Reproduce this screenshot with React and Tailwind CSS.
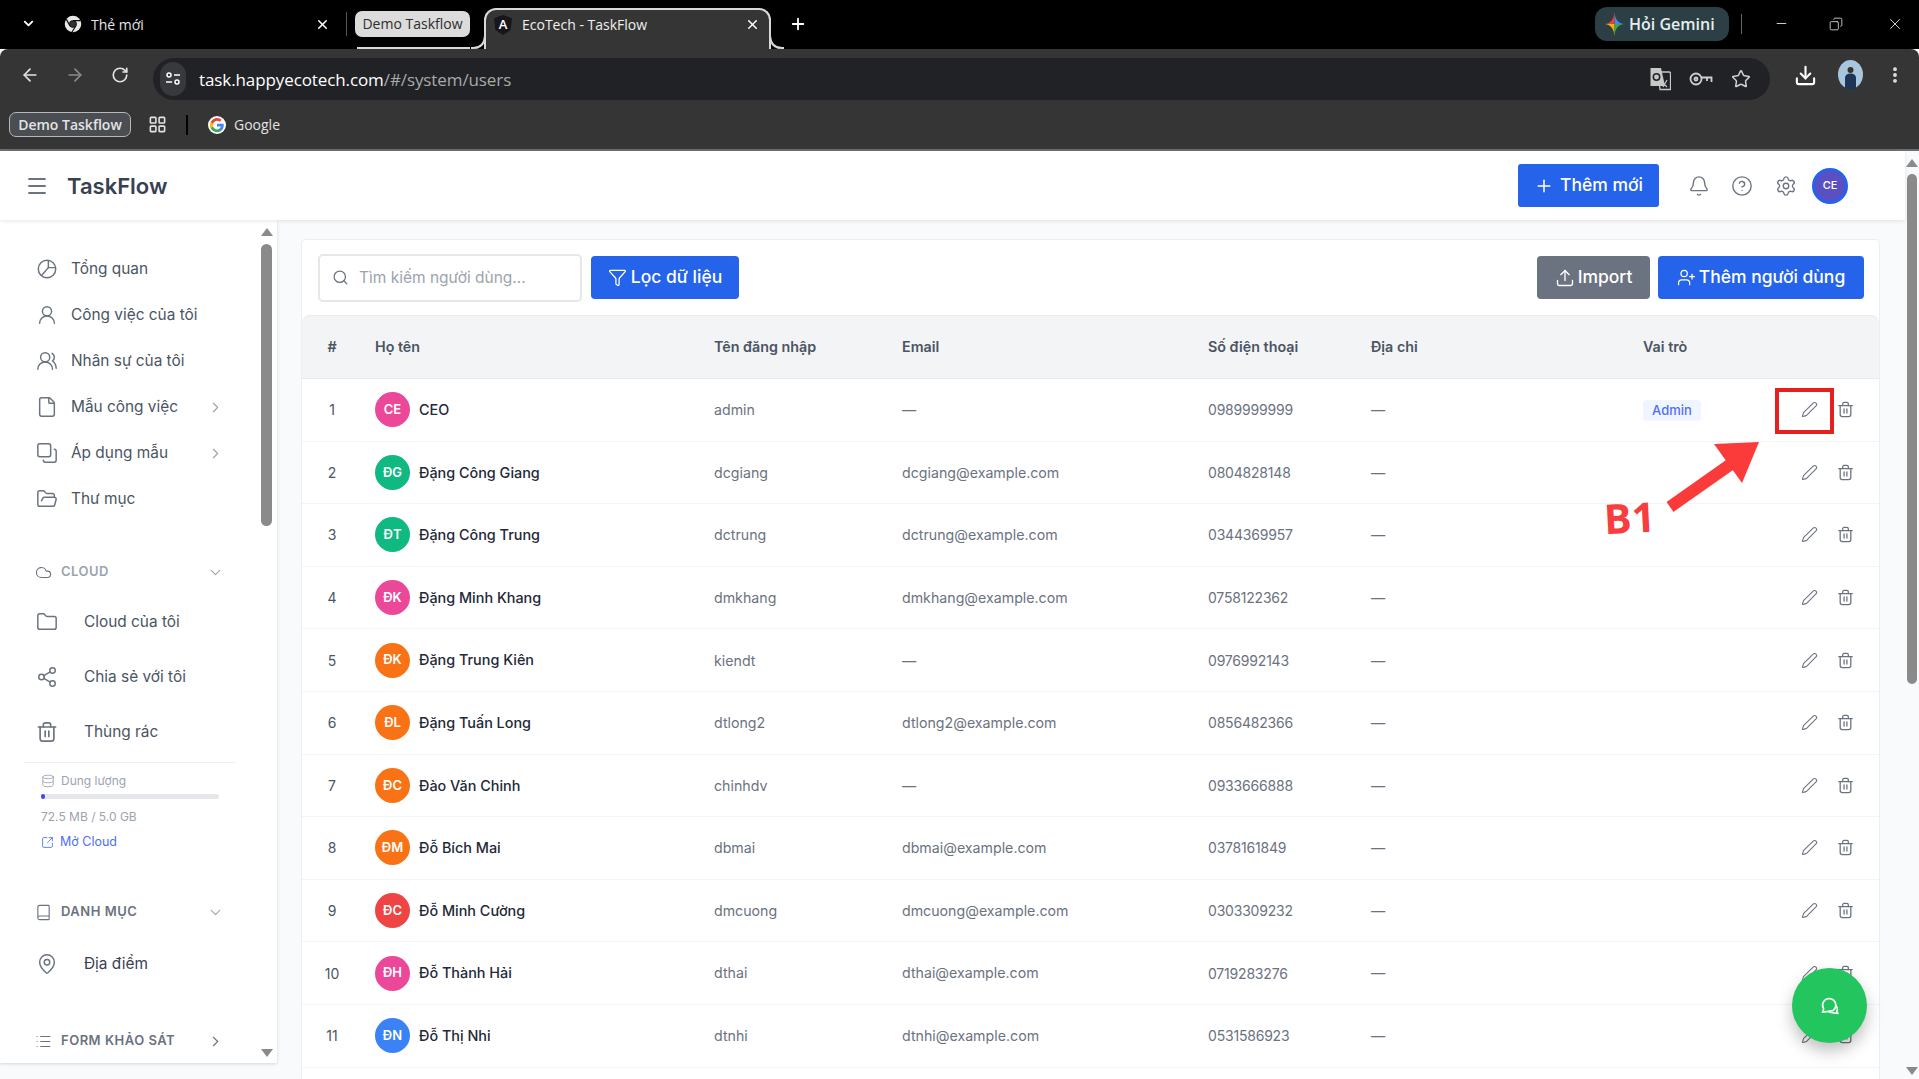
import {
  ArrowLeft, ArrowRight, Bell, Book, ChevronDown, ChevronRight, CircleHelp, Cloud, Copy, Database, Download,
  EllipsisVertical, File, Filter, Folder, FolderOpen, LayoutGrid, List, MapPin, Menu, Pen,
  Plus, RotateCw, Search, Settings, Share2, SquareArrowOutUpRight, Star, Upload, UserPlus, UserRound, UsersRound, X, Minus,
} from "lucide-react";

const users = [
  { id: 1, initials: "CE", color: "bg-[#ec4899]", name: "CEO", login: "admin", email: "—", phone: "0989999999", role: "Admin" },
  { id: 2, initials: "ĐG", color: "bg-[#10b981]", name: "Đặng Công Giang", login: "dcgiang", email: "dcgiang@example.com", phone: "0804828148" },
  { id: 3, initials: "ĐT", color: "bg-[#10b981]", name: "Đặng Công Trung", login: "dctrung", email: "dctrung@example.com", phone: "0344369957" },
  { id: 4, initials: "ĐK", color: "bg-[#ec4899]", name: "Đặng Minh Khang", login: "dmkhang", email: "dmkhang@example.com", phone: "0758122362" },
  { id: 5, initials: "ĐK", color: "bg-[#f97316]", name: "Đặng Trung Kiên", login: "kiendt", email: "—", phone: "0976992143" },
  { id: 6, initials: "ĐL", color: "bg-[#f97316]", name: "Đặng Tuấn Long", login: "dtlong2", email: "dtlong2@example.com", phone: "0856482366" },
  { id: 7, initials: "ĐC", color: "bg-[#f97316]", name: "Đào Văn Chinh", login: "chinhdv", email: "—", phone: "0933666888" },
  { id: 8, initials: "ĐM", color: "bg-[#f97316]", name: "Đỗ Bích Mai", login: "dbmai", email: "dbmai@example.com", phone: "0378161849" },
  { id: 9, initials: "ĐC", color: "bg-[#ef4444]", name: "Đỗ Minh Cường", login: "dmcuong", email: "dmcuong@example.com", phone: "0303309232" },
  { id: 10, initials: "ĐH", color: "bg-[#ec4899]", name: "Đỗ Thành Hải", login: "dthai", email: "dthai@example.com", phone: "0719283276" },
  { id: 11, initials: "ĐN", color: "bg-[#3b82f6]", name: "Đỗ Thị Nhi", login: "dtnhi", email: "dtnhi@example.com", phone: "0531586923" },
];

const cols = "grid grid-cols-[73px_339px_188px_306px_163px_272px_1fr] items-center";

function PieIcon() {
  return (
    <svg width="22" height="22" viewBox="0 0 24 24" fill="none" stroke="currentColor" strokeWidth="1.6" strokeLinecap="round" strokeLinejoin="round">
      <circle cx="12" cy="12" r="9.5" />
      <path d="M13.5 2.6V10.5H21.4" />
      <path d="M13.5 10.5L6.5 18.5" />
    </svg>
  );
}

function TrashIcon({ size = 17 }) {
  return (
    <svg width={size} height={size} viewBox="0 0 24 24" fill="none" stroke="currentColor" strokeWidth="1.8" strokeLinecap="round" strokeLinejoin="round">
      <path d="M2.5 6.5H21.5" />
      <path d="M8 6.5V4a2 2 0 0 1 2-2h4a2 2 0 0 1 2 2v2.5" />
      <path d="M4.5 6.5V19a3 3 0 0 0 3 3h9a3 3 0 0 0 3-3V6.5" />
      <path d="M10 11V17M14 11V17" />
    </svg>
  );
}

function ChromeLogo() {
  return (
    <svg width="18" height="18" viewBox="0 0 24 24">
      <circle cx="12" cy="12" r="11" fill="#e8e8e8" />
      <path d="M12 7.5H22M8 14.5L3 5.5M15.5 15L10.5 23" stroke="#111" strokeWidth="1.6" />
      <circle cx="12" cy="12" r="4.4" fill="#333" stroke="#111" strokeWidth="1.4" />
    </svg>
  );
}

function AngularLogo() {
  return (
    <div className="relative w-[18px] h-[20px] flex items-center justify-center">
      <svg width="18" height="20" viewBox="0 0 18 20" className="absolute inset-0">
        <path d="M9 0L0 3.2L1.4 15L9 20L16.6 15L18 3.2Z" fill="#17171b" />
      </svg>
      <span className="relative text-white text-[13px] font-semibold leading-none">A</span>
    </div>
  );
}

function GoogleLogo() {
  return (
    <svg width="18" height="18" viewBox="0 0 48 48">
      <circle cx="24" cy="24" r="24" fill="#fff" />
      <path fill="#4285f4" d="M42 24.5c0-1.300-.1-2.600-.4-3.800H24v7.300h10.100c-.4 2.300-1.700 4.300-3.700 5.600v4.600h6c3.500-3.200 5.600-8 5.600-13.700z" />
      <path fill="#34a853" d="M24 43c5 0 9.300-1.700 12.400-4.400l-6-4.600c-1.700 1.100-3.900 1.800-6.400 1.800-4.900 0-9-3.300-10.500-7.700H7.300v4.800C10.400 38.300 16.700 43 24 43z" />
      <path fill="#fbbc05" d="M13.500 28.100c-.8-2.300-.8-4.900 0-7.200V16H7.300c-2.600 5.100-2.600 11.100 0 16.900z" />
      <path fill="#ea4335" d="M24 12.800c2.700 0 5.200.9 7.100 2.800l5.300-5.300C33.200 7.200 28.900 5 24 5 16.700 5 10.400 9.700 7.300 16l6.200 4.900c1.500-4.500 5.600-8.100 10.500-8.100z" />
    </svg>
  );
}

function GeminiSpark() {
  return (
    <svg width="19" height="24" viewBox="0 0 24 24" preserveAspectRatio="none">
      <path d="M12 0C12.800 7 16 11 24 12H12Z" fill="#4285f4" />
      <path d="M12 0C11.200 7 8 11 0 12H12Z" fill="#ea4335" />
      <path d="M0 12C8 13 11.200 17 12 24V12Z" fill="#f4b400" />
      <path d="M24 12C16 13 12.800 17 12 24V12Z" fill="#34a853" />
    </svg>
  );
}

function TranslateIcon() {
  return (
    <svg width="22" height="24" viewBox="0 0 22 24" className="text-[#c8c8c8]">
      <path d="M9 5H20a1.500 1.500 0 0 1 1.500 1.500V22.500H11Z" fill="none" stroke="currentColor" strokeWidth="1.300" />
      <path d="M1.500 1H12L16 19H1.500Z" fill="currentColor" />
      <circle cx="7.500" cy="10" r="3.200" fill="none" stroke="#212225" strokeWidth="1.500" />
      <path d="M13 15L18 20M18 13L14 20" stroke="currentColor" strokeWidth="1.200" />
    </svg>
  );
}

function KeyIcon() {
  return (
    <svg width="24" height="16" viewBox="0 0 24 16" fill="none" stroke="#d0d0d0" strokeWidth="1.800">
      <circle cx="7" cy="8" r="5.500" />
      <circle cx="7" cy="8" r="1.500" />
      <path d="M12.500 6.500H22.500V11M18 6.500V10" />
    </svg>
  );
}

function ProfilePhoto() {
  return (
    <svg width="25" height="29" viewBox="0 0 25 29">
      <ellipse cx="12.500" cy="14.500" rx="12.500" ry="14.500" fill="#a8c6dc" />
      <circle cx="12.500" cy="10" r="3" fill="#3a2f2a" />
      <path d="M7 29V18c0-3 2-4.500 5.500-4.500S18 15 18 18v11z" fill="#1d3557" />
    </svg>
  );
}

function ChatBubbles() {
  return (
    <svg width="20" height="20" viewBox="0 0 24 24" fill="none" stroke="#fff" strokeWidth="2" strokeLinecap="round" strokeLinejoin="round">
      <path d="M11 3a8 8 0 0 1 8 8c0 3-1.500 5-3.500 6.500L3 19.500c1-1 1.500-2.500 1.200-4.500A8 8 0 0 1 11 3z" />
      <path d="M19 11c2 2.500 2 6 1 7.500l1.500 2.500L11 19.500" />
    </svg>
  );
}

function BrowserChrome() {
  return (
    <div className="shrink-0 font-['Open_Sans',sans-serif]">
      <div className="h-[49px] bg-black flex items-end relative">
        <div className="h-[49px] w-[60px] flex items-center justify-end pr-[24px] pb-[2px] text-white">
          <ChevronDown size={15} strokeWidth={3} />
        </div>
        <div className="h-[49px] w-[286px] flex items-center pb-[1px] text-[#e6e6e6]">
          <div className="ml-[4px]"><ChromeLogo /></div>
          <span className="ml-[9px] text-[14px] flex-1">Thẻ mới</span>
          <X size={15} strokeWidth={2.4} className="mr-[16px] text-white" />
        </div>
        <div className="w-px h-[24px] bg-[#555] mb-[13px]" />
        <div className="h-[49px] w-[137px] relative pl-[8px] flex items-center pb-[2px]">
          <div className="w-[115px] h-[26px] rounded-[7px] bg-[#dcdcdc] text-[#2d2d2d] text-[14px] flex items-center justify-center">Demo Taskflow</div>
          <div className="absolute left-[10px] right-[14px] bottom-0 h-[2px] bg-[#d8d8d8]" />
        </div>
        <div className="relative h-[41px] w-[287px] bg-[#353535] border-2 border-b-0 border-[#d8d8d8] rounded-t-[12px] flex items-center pb-[10px] text-[#f0f0f0]">
          <div className="ml-[8px]"><AngularLogo /></div>
          <span className="ml-[10px] text-[14px] flex-1">EcoTech - TaskFlow</span>
          <X size={15} strokeWidth={2.4} className="mr-[9px] text-white" />
          <svg width="14" height="14" viewBox="0 0 14 14" fill="none" stroke="#d8d8d8" strokeWidth="2" className="absolute left-[-15px] bottom-0">
            <path d="M0 13H2Q13 13 14 1" />
          </svg>
          <svg width="14" height="14" viewBox="0 0 14 14" fill="none" stroke="#d8d8d8" strokeWidth="2" className="absolute right-[-15px] bottom-0">
            <path d="M14 13H12Q1 13 0 1" />
          </svg>
        </div>
        <div className="h-[49px] ml-[18px] flex items-center pb-[2px] text-white"><Plus size={18} strokeWidth={2.4} /></div>
        <div className="flex-1" />
        <div className="h-[49px] flex items-center pb-[2px] text-[#e5e5e5]">
          <div className="w-[134px] h-[34px] rounded-[12px] bg-[#2b3f44] flex items-center pl-[10px] gap-[5px]">
            <GeminiSpark />
            <span className="text-[16px] font-semibold text-[#e6eef0] whitespace-nowrap">Hỏi Gemini</span>
          </div>
          <div className="w-px h-[20px] bg-[#666] ml-[12px]" />
          <Minus size={15} className="ml-[32px]" strokeWidth={1.4} />
          <Copy size={14} className="ml-[40px] -scale-x-100" strokeWidth={1.4} />
          <X size={18} className="ml-[43px] mr-[15px]" strokeWidth={1.2} />
        </div>
      </div>

      <div className="h-[51px] bg-[#353535] rounded-tl-[8px] rounded-tr-[8px] flex items-center text-[#e3e3e3]">
        <ArrowLeft size={20} strokeWidth={2} className="ml-[20px]" />
        <ArrowRight size={20} strokeWidth={2} className="ml-[25px] text-[#8a8a8a]" />
        <RotateCw size={18} strokeWidth={2.2} className="ml-[26px]" />
        <div className="ml-[24px] w-[1617px] h-[42px] mt-[8px] mb-[-1px] rounded-full bg-[#212225] flex items-center pl-[7px]">
          <div className="w-[26px] h-[34px] rounded-full bg-[#37393d] flex items-center justify-center text-white">
            <svg width="16" height="16" viewBox="0 0 16 16" fill="none" stroke="currentColor" strokeWidth="1.5">
              <circle cx="4" cy="4" r="2" /><path d="M9 4H15M1 11H7" /><circle cx="12" cy="11" r="2" />
            </svg>
          </div>
          <span className="ml-[13px] pt-[1px] text-[17px] tracking-[-0.1px]"><span className="text-white">task.happyecotech.com</span><span className="text-[#a9a9a9]">/#/system/users</span></span>
          <div className="flex-1" />
          <TranslateIcon />
          <div className="ml-[18px]"><KeyIcon /></div>
          <Star size={20} strokeWidth={1.8} className="ml-[18px] mr-[19px] text-[#d0d0d0]" />
        </div>
        <Download size={23} strokeWidth={2.2} className="ml-[24px] mt-[2px] text-white" />
        <div className="ml-[21px]"><ProfilePhoto /></div>
        <EllipsisVertical size={20} strokeWidth={2.6} className="ml-[22px]" />
      </div>

      <div className="h-[51px] bg-[#353535] border-b-2 border-[#6e6e6e] flex items-center text-[#e3e3e3]">
        <div className="ml-[9px] w-[122px] h-[25px] rounded-[7px] border border-[#b8b8b8] bg-[#4a4d52] text-[14px] font-semibold flex items-center justify-center">Demo Taskflow</div>
        <LayoutGrid size={19} strokeWidth={2} className="ml-[17px]" />
        <div className="ml-[19px] w-[2px] h-[20px] bg-black" />
        <div className="ml-[20px]"><GoogleLogo /></div>
        <span className="ml-[8px] text-[14px]">Google</span>
      </div>
    </div>
  );
}

function NavItem({ icon: Icon, label, chevron, flip }) {
  return (
    <div className="h-[46px] flex items-center text-[15.4px] text-[#4b5563]">
      <div className={`w-[22px] flex justify-center text-[#6b7280] ${flip ? "rotate-180" : ""}`}>
        {Icon ? <Icon size={22} strokeWidth={1.6} /> : <PieIcon />}
      </div>
      <span className="ml-[13px] flex-1 whitespace-nowrap">{label}</span>
      {chevron && <ChevronRight size={17} strokeWidth={1.6} className="text-[#9ca3af] mr-[2px]" />}
    </div>
  );
}

function SubItem({ icon: Icon, label, dark }) {
  return (
    <div className={`h-[55px] flex items-center text-[15.4px] ${dark ? "text-[#374151]" : "text-[#4b5563]"}`}>
      <div className="w-[22px] flex justify-center text-[#6b7280]">
        <Icon size={22} strokeWidth={1.6} />
      </div>
      <span className="ml-[26px]">{label}</span>
    </div>
  );
}

function SectionHead({ icon: Icon, label, open, light }) {
  return (
    <div className={`h-[24px] flex items-center -ml-px text-[13px] font-semibold tracking-[0.5px] ${light ? "text-[#9ca3af]" : "text-[#6b7280]"}`}>
      <div className="w-[17px] flex justify-center text-[#6b7280]"><Icon size={17} strokeWidth={1.6} /></div>
      <span className="ml-[9px] flex-1 whitespace-nowrap">{label}</span>
      {open
        ? <ChevronDown size={17} strokeWidth={1.6} className="text-[#9ca3af] mr-[2px]" />
        : <ChevronRight size={17} strokeWidth={1.6} className="text-[#6b7280] mr-[2px]" />}
    </div>
  );
}

function Sidebar() {
  return (
    <aside className="w-[277px] h-[843px] shrink-0 bg-white shadow-[0_1px_3px_rgba(0,0,0,0.15)] flex">
      <div className="w-[260px] pl-[36px] pr-[34px] pt-[26px] overflow-hidden">
        <NavItem label="Tổng quan" />
        <NavItem icon={UserRound} label="Công việc của tôi" />
        <NavItem icon={UsersRound} label="Nhân sự của tôi" />
        <NavItem icon={File} label="Mẫu công việc" chevron />
        <NavItem icon={Copy} label="Áp dụng mẫu" chevron flip />
        <NavItem icon={FolderOpen} label="Thư mục" />

        <div className="mt-[38px]"><SectionHead icon={Cloud} label="CLOUD" open light /></div>
        <div className="mt-[10px]">
          <SubItem icon={Folder} label="Cloud của tôi" />
          <SubItem icon={Share2} label="Chia sẻ với tôi" />
          <SubItem icon={TrashIcon} label="Thùng rác" />
        </div>

        <div className="-ml-[12px] w-[212px] h-px bg-[#f0f1f3] mt-[3px]" />
        <div className="ml-[5px] mt-[10px] w-[178px]">
          <div className="h-[16px] flex items-center gap-[6px] text-[12px] text-[#9ca3af]">
            <Database size={14} strokeWidth={1.5} />Dung lượng
          </div>
          <div className="mt-[5px] h-[5px] rounded-full bg-[#e5e7eb]">
            <div className="w-[4px] h-[5px] rounded-full bg-[#4f46e5]" />
          </div>
          <div className="mt-[10px] h-[16px] flex items-center text-[12px] text-[#9ca3af]">72.5 MB / 5.0 GB</div>
          <div className="mt-[9px] h-[16px] flex items-center gap-[6px] text-[12.5px] text-[#4f6ef7]">
            <SquareArrowOutUpRight size={13} strokeWidth={1.6} />Mở Cloud
          </div>
        </div>

        <div className="mt-[50px]"><SectionHead icon={Book} label="DANH MỤC" open /></div>
        <div className="mt-[12px]"><SubItem icon={MapPin} label="Địa điểm" dark /></div>
        <div className="mt-[38px]"><SectionHead icon={List} label="FORM KHẢO SÁT" /></div>
      </div>
      <div className="w-[17px] flex flex-col items-center pr-[4px] pt-[8px] pb-[6px]">
        <div className="w-0 h-0 border-x-[6px] border-x-transparent border-b-[8px] border-b-[#8a8a8a]" />
        <div className="w-[11px] h-[282px] mt-[8px] rounded-full bg-[#8a8a8a]" />
        <div className="flex-1" />
        <div className="w-0 h-0 border-x-[6px] border-x-transparent border-t-[8px] border-t-[#8a8a8a]" />
      </div>
    </aside>
  );
}

function UserRow({ user }) {
  return (
    <div className={`${cols} h-[62.6px] border-b border-[#f3f4f6] text-[14.2px] text-[#6b7280]`}>
      <div className="w-[60px] text-center text-[14px] text-[#4b5563]">{user.id}</div>
      <div className="flex items-center gap-[9px]">
        <div className={`w-[35px] h-[35px] rounded-full ${user.color} flex items-center justify-center text-white text-[13px] font-semibold`}>{user.initials}</div>
        <span className="text-[14.4px] font-medium text-[#1f2937]">{user.name}</span>
      </div>
      <div>{user.login}</div>
      <div>{user.email}</div>
      <div className="text-[14px] tracking-[-0.2px]">{user.phone}</div>
      <div>—</div>
      <div className="flex items-center justify-between pr-[25px]">
        <div className="w-[58px]">
          {user.role && <span className="block h-[21px] mt-[1px] leading-[21px] text-center rounded-[4px] bg-[#eff6ff] text-[#4f6ef7] text-[13px] font-medium">{user.role}</span>}
        </div>
        <div className="flex items-center gap-[19px] text-[#6b7280]">
          <Pen size={17} strokeWidth={1.5} />
          <TrashIcon />
        </div>
      </div>
    </div>
  );
}

function UsersCard() {
  return (
    <div className="bg-white border border-[#eceef1] rounded-[4px]">
      <div className="h-[75px] pl-[16px] pr-[15px] flex items-center">
        <div className="w-[264px] h-[48px] rounded-[5px] border-2 border-[#e5e7eb] flex items-center pl-[12px] text-[#9ca3af]">
          <Search size={17} strokeWidth={1.8} className="text-[#6b7280]" />
          <span className="ml-[10px] text-[15.5px]">Tìm kiếm người dùng...</span>
        </div>
        <button className="ml-[9px] w-[148px] h-[43px] rounded-[4px] bg-[#2563eb] text-white text-[17.5px] font-medium flex items-center justify-center gap-[4px]">
          <Filter size={19} strokeWidth={1.6} />Lọc dữ liệu
        </button>
        <div className="flex-1" />
        <button className="w-[113px] h-[43px] rounded-[4px] bg-[#6b7280] text-white text-[17.5px] font-medium flex items-center justify-center gap-[3px]">
          <Upload size={20} strokeWidth={1.6} />Import
        </button>
        <button className="ml-[8px] w-[206px] h-[43px] rounded-[4px] bg-[#2563eb] text-white text-[17.5px] font-medium flex items-center justify-center gap-[3px]">
          <UserPlus size={19} strokeWidth={1.6} />Thêm người dùng
        </button>
      </div>
      <div className={`${cols} h-[64px] bg-[#f3f4f6] border-y border-[#e9ebee] rounded-t-[8px] text-[14.3px] font-semibold text-[#4b5563]`}>
        <div className="w-[60px] text-center">#</div>
        <div>Họ tên</div>
        <div>Tên đăng nhập</div>
        <div>Email</div>
        <div>Số điện thoại</div>
        <div>Địa chỉ</div>
        <div>Vai trò</div>
      </div>
      {users.map(u => <UserRow key={u.id} user={u} />)}
      <div className="h-[60px]" />
    </div>
  );
}

export default function App() {
  return (
    <div className="relative w-screen h-screen overflow-hidden flex flex-col bg-white font-['Inter',sans-serif]">
      <BrowserChrome />

      <div className="flex-1 min-h-0 flex">
        <div className="flex-1 min-w-0 flex flex-col">
          <header className="h-[69px] shrink-0 relative bg-white shadow-[0_1px_4px_rgba(0,0,0,0.1)] flex items-center pl-[25px]">
            <Menu size={24} strokeWidth={1.8} className="text-[#6b7280]" />
            <span className="ml-[18px] pt-[1px] text-[22px] font-semibold text-[#374151]">TaskFlow</span>
            <div className="flex-1" />
            <button className="w-[141px] h-[43px] rounded-[3px] bg-[#2563eb] text-white text-[17.5px] font-medium flex items-center justify-center gap-[6px]">
              <Plus size={20} strokeWidth={1.8} />Thêm mới
            </button>
            <Bell size={22} strokeWidth={1.5} className="ml-[29px] text-[#6b7280]" />
            <CircleHelp size={22} strokeWidth={1.5} className="ml-[21px] text-[#6b7280]" />
            <Settings size={22} strokeWidth={1.5} className="ml-[22px] text-[#6b7280]" />
            <div className="ml-[15px] mr-[57px] w-[36px] h-[36px] rounded-full bg-[#5b4fc4] border-[3px] border-[#2563eb] flex items-center justify-center text-white text-[11px] font-medium">CE</div>
          </header>
          <div className="flex-1 min-h-0 flex bg-[#f9fafb]">
            <Sidebar />
            <main className="flex-1 min-w-0 pl-[24px] pr-[25px] pt-[19px] overflow-hidden">
              <UsersCard />
            </main>
          </div>
        </div>
        <div className="w-[14px] shrink-0 bg-[#f9fafb] flex flex-col items-center pt-[8px] pb-[4px]">
          <div className="w-0 h-0 border-x-[6px] border-x-transparent border-b-[8px] border-b-[#8a8a8a]" />
          <div className="w-[10px] h-[510px] mt-[7px] rounded-full bg-[#8a8a8a]" />
          <div className="flex-1" />
          <div className="w-0 h-0 border-x-[6px] border-x-transparent border-t-[8px] border-t-[#8a8a8a]" />
        </div>
      </div>

      {/* annotation + chat button sit on top of the page */}
      <div className="absolute left-[1775px] top-[388px] w-[59px] h-[46px] border-4 border-[#e5201f]" />
      <svg width="100" height="75" viewBox="0 0 100 75" className="absolute left-[1665px] top-[438px]">
        <path d="M5 69L66 26" stroke="#fb3a3a" strokeWidth="12" />
        <path d="M49 6L94 4L77 45Z" fill="#fb3a3a" />
      </svg>
      <div className="absolute left-[1604px] top-[492px] -rotate-3 text-[41px] leading-[50px] font-bold text-[#f73d3d] font-['Open_Sans',sans-serif]">B1</div>
      <div className="absolute left-[1792px] top-[968px] w-[75px] h-[75px] rounded-full bg-[#22c55e] shadow-[0_8px_16px_rgba(0,0,0,0.25)] flex items-center justify-center">
        <ChatBubbles />
      </div>
    </div>
  );
}
